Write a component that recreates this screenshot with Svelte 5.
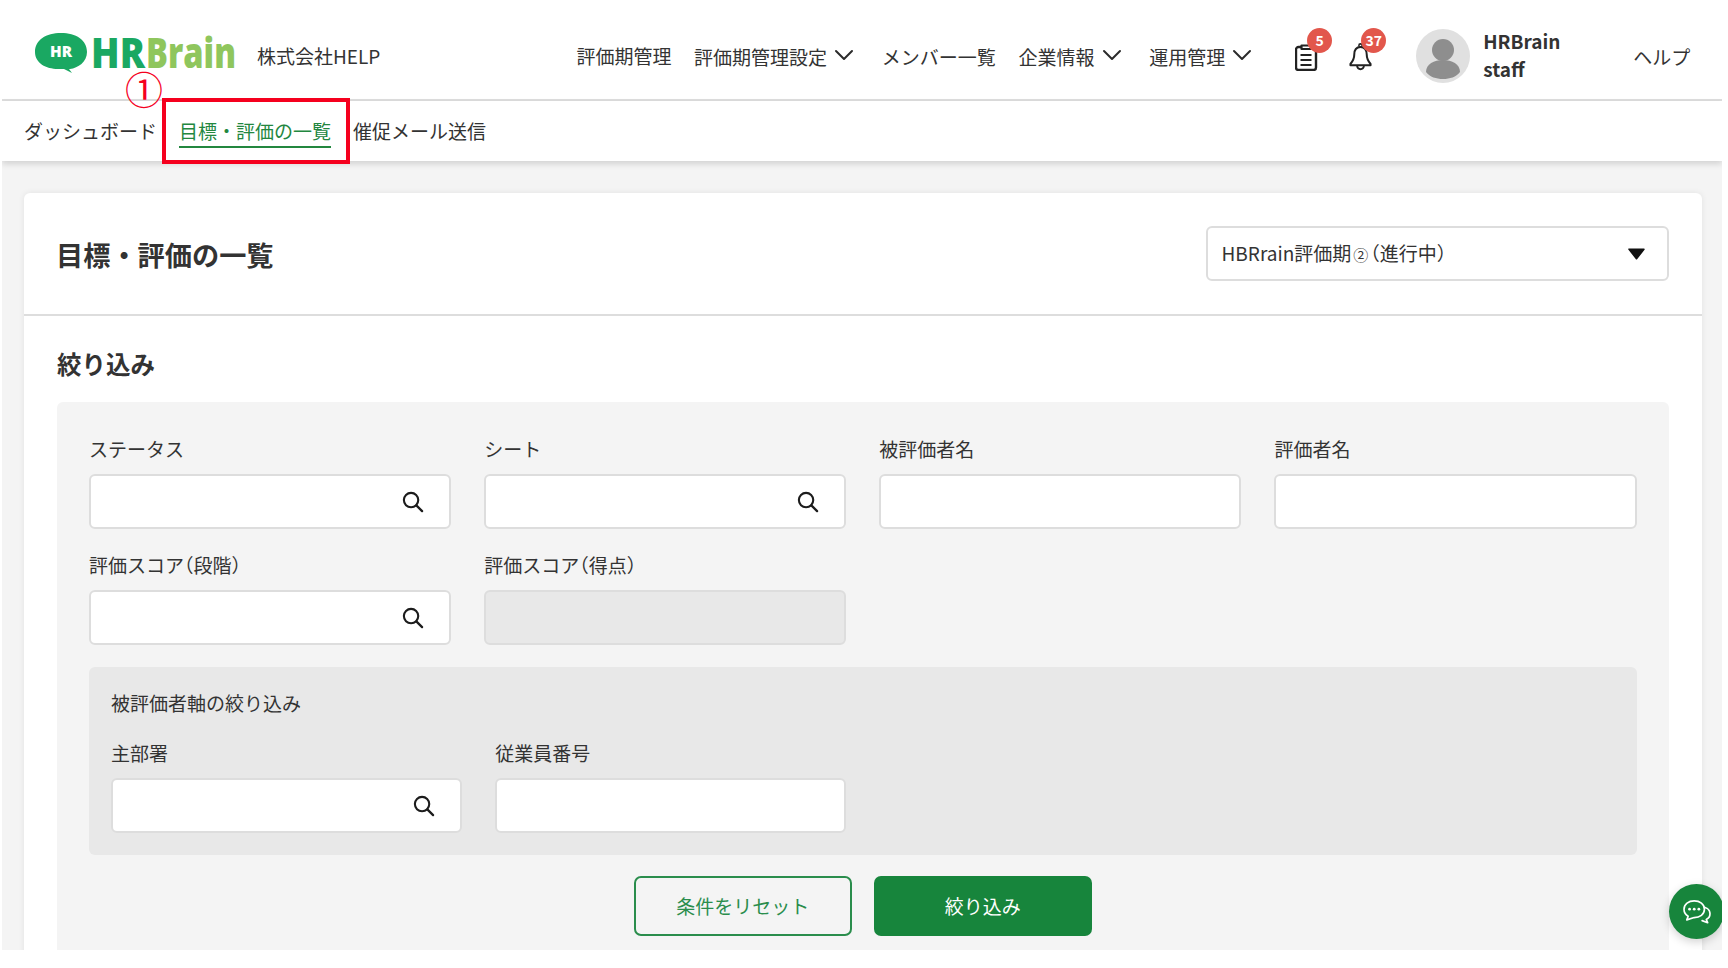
<script>
  const rowA = [
    { label: 'ステータス', search: true },
    { label: 'シート', search: true },
    { label: '被評価者名', search: false },
    { label: '評価者名', search: false }
  ];
</script>

{#snippet searchIcon()}
  <svg class="search" viewBox="0 0 24 24" aria-hidden="true">
    <circle cx="10.5" cy="10.5" r="7.5" fill="none" stroke="#1c1c1c" stroke-width="2.2" />
    <path d="M16 16l6 6" fill="none" stroke="#1c1c1c" stroke-width="2.4" stroke-linecap="round" />
  </svg>
{/snippet}

{#snippet chevron()}
  <svg class="chev" viewBox="0 0 20 12" aria-hidden="true">
    <path d="M2 2l8 8 8-8" fill="none" stroke="#2b2b2b" stroke-width="2" stroke-linecap="round" stroke-linejoin="round" />
  </svg>
{/snippet}

<div class="page">
  <header class="top">
    <div class="logo">
      <svg viewBox="0 0 202 44" class="logo-svg" role="img" aria-label="HRBrain">
        <path d="M1 21C1 9 12 2 27 2s26 7 26 19c0 10-9 16-17 17l-1 0 3 4-8-4H24C12 38 1 32 1 21z" fill="#1aa862" />
        <text x="27" y="26" text-anchor="middle" class="lg-hr" textLength="22" lengthAdjust="spacingAndGlyphs">HR</text>
        <text x="57" y="37" class="lg-a" textLength="54" lengthAdjust="spacingAndGlyphs">HR</text>
        <text x="112" y="37" class="lg-b" textLength="90" lengthAdjust="spacingAndGlyphs">Brain</text>
      </svg>
    </div>
    <div class="company">株式会社HELP</div>
    <nav class="main-nav">
      <span class="item plain">評価期管理</span>
      <span class="item">評価期管理設定{@render chevron()}</span>
      <span class="item plain">メンバー一覧</span>
      <span class="item">企業情報{@render chevron()}</span>
      <span class="item">運用管理{@render chevron()}</span>
    </nav>
    <div class="alerts">
      <div class="alert">
        <svg viewBox="1 1 22 28" class="a-icon" aria-hidden="true">
          <path d="M7 5H4a2.500 2.500 0 0 0-2.500 2.500v18A2.500 2.500 0 0 0 4 28h15a2.500 2.500 0 0 0 2.500-2.500v-18A2.500 2.500 0 0 0 19 5h-2" fill="none" stroke="#222" stroke-width="2.400" />
          <path d="M7 7V3.500h10V7z" fill="none" stroke="#222" stroke-width="2.200" stroke-linejoin="round" />
          <path d="M6 13h11M6 18h11M6 23h11" stroke="#222" stroke-width="2.200" fill="none" />
        </svg>
        <span class="badge">5</span>
      </div>
      <div class="alert">
        <svg viewBox="0 1 24 28" class="a-icon" aria-hidden="true">
          <path d="M12 4.500c-4.500 0-6.500 3.500-6.500 8 0 5-1.500 7-4 9.800V23.500h21V22.300c-2.500-2.800-4-4.800-4-9.800 0-4.500-2-8-6.500-8z" fill="none" stroke="#222" stroke-width="2.100" stroke-linejoin="round" />
          <path d="M8.500 24.500a3.500 3.200 0 0 0 7 0" fill="none" stroke="#222" stroke-width="2" />
          <circle cx="12" cy="3" r="1.700" fill="none" stroke="#222" stroke-width="1.600" />
        </svg>
        <span class="badge">37</span>
      </div>
    </div>
    <div class="avatar">
      <svg viewBox="0 0 54 54" aria-hidden="true">
        <circle cx="27" cy="27" r="27" fill="#e0e0e0" />
        <circle cx="27" cy="21" r="11" fill="#8e8e8e" />
        <path d="M10 43c0-8 8-12 17-12s17 4 17 12c-4 5-10 7-17 7s-13-2-17-7z" fill="#8e8e8e" />
      </svg>
    </div>
    <div class="user">HRBrain<br />staff</div>
    <div class="help">ヘルプ</div>
  </header>

  <nav class="sub-nav">
    <span>ダッシュボード</span>
    <span class="active">目標・評価の一覧</span>
    <span>催促メール送信</span>
  </nav>

  <main class="card">
    <div class="card-head">
      <h1>目標・評価の一覧</h1>
      <div class="select">
        <span>HBRrain評価期<span class="small">②</span><span class="halt">（</span>進行中<span class="halt">）</span></span>
        <svg class="caret" viewBox="0 0 16 11" aria-hidden="true"><path d="M1 1h14L8 10z" fill="#111" stroke="#111" stroke-width="1.500" stroke-linejoin="round" /></svg>
      </div>
    </div>
    <div class="card-body">
      <h2>絞り込み</h2>
      <div class="filter">
        <div class="grid">
          {#each rowA as f}
            <div class="field">
              <label for="">{f.label}</label>
              <div class="input">{#if f.search}{@render searchIcon()}{/if}</div>
            </div>
          {/each}
          <div class="field">
            <label for="">評価スコア<span class="halt">（</span>段階<span class="halt">）</span></label>
            <div class="input">{@render searchIcon()}</div>
          </div>
          <div class="field">
            <label for="">評価スコア<span class="halt">（</span>得点<span class="halt">）</span></label>
            <div class="input disabled"></div>
          </div>
        </div>
        <section class="panel">
          <div class="panel-title">被評価者軸の絞り込み</div>
          <div class="grid">
            <div class="field">
              <label for="">主部署</label>
              <div class="input">{@render searchIcon()}</div>
            </div>
            <div class="field">
              <label for="">従業員番号</label>
              <div class="input"></div>
            </div>
          </div>
        </section>
        <div class="actions">
          <button class="btn ghost">条件をリセット</button>
          <button class="btn solid">絞り込み</button>
        </div>
      </div>
    </div>
  </main>

  <div class="chat">
    <svg viewBox="0 0 32 28" aria-hidden="true">
      <path d="M20.500 8.500c5 0 9.500 2.500 9.500 7.500 0 3-1.500 5-4 6.200l1.500 3.300-6-2.200" fill="none" stroke="#fff" stroke-width="1.800" stroke-linejoin="round" stroke-linecap="round" />
      <path d="M13 2C7 2 2 5.500 2 11c0 3.500 2 6 4.500 7.500L5 22.500l8-2.500c6 0 11-3.500 11-9S19 2 13 2z" fill="#17853c" stroke="#fff" stroke-width="1.800" stroke-linejoin="round" />
      <circle cx="8" cy="11" r="1.500" fill="#fff" /><circle cx="13" cy="11" r="1.500" fill="#fff" /><circle cx="18" cy="11" r="1.500" fill="#fff" />
    </svg>
  </div>

  <div class="mark-box"></div>
  <div class="mark-num">①</div>
</div>

<style>
  :global(body) {
    margin: 0;
    background: #fff;
    font-family: "Noto Sans CJK JP", "Noto Sans", sans-serif;
    color: #333;
  }
  .page {
    position: relative;
    width: 1720px;
    height: 950px;
    margin-left: 2px;
    background: #f4f4f4;
    overflow: hidden;
    font-size: 19px;
    line-height: 28px;
  }
  .top {
    display: flex;
    align-items: center;
    height: 101px;
    box-sizing: border-box;
    border-bottom: 2px solid #ddd;
    background: #fff;
    padding-left: 32px;
  }
  .logo-svg { display: block; width: 202px; height: 44px; overflow: visible; }
  .logo { margin-top: 6px; }
  .lg-hr { font: 800 16px "Open Sans", sans-serif; fill: #fff; }
  .lg-a { font: 800 42px "Open Sans", sans-serif; fill: #1aa862; }
  .lg-b { font: 800 42px "Open Sans", sans-serif; fill: #8fc65d; }
  .company { margin-left: 21px; margin-top: 12px; }
  .main-nav {
    display: flex;
    align-items: center;
    gap: 22.7px;
    margin-left: 196px;
    margin-top: 15px;
  }
  .item { display: flex; align-items: center; white-space: nowrap; }
  .item.plain:first-child { margin-top: -2px; }
  .chev { width: 20px; height: 12px; margin: -4px 5px 0 7px; }
  .alerts { display: flex; gap: 31px; margin-left: 38px; margin-top: 14px; }
  .alert { position: relative; width: 23px; height: 28px; }
  .a-icon { display: block; width: 23px; height: 28px; }
  .badge {
    position: absolute;
    left: 12px;
    top: -15px;
    width: 25px;
    height: 25px;
    border-radius: 50%;
    background: #e2574c;
    color: #fff;
    font-size: 14px;
    font-weight: 700;
    line-height: 25px;
    text-align: center;
  }
  .avatar { width: 54px; height: 54px; margin-left: 44px; margin-top: 12px; }
  .avatar svg { display: block; width: 54px; height: 54px; }
  .user { margin-left: 13px; margin-top: 10px; font-weight: 700; width: 150px; }
  .help { white-space: nowrap; margin-top: 14px; }
  .sub-nav {
    position: relative;
    display: flex;
    align-items: flex-start;
    gap: 22px;
    height: 60px;
    box-sizing: border-box;
    padding: 16px 0 0 22px;
    background: #fff;
    box-shadow: 0 3px 6px rgba(0, 0, 0, 0.14);
  }
  .sub-nav span { display: block; height: 29px; white-space: nowrap; }
  .active { color: #23873f; border-bottom: 2px solid #23873f; }
  .card {
    margin: 32px 20.5px 0 22px;
    background: #fff;
    border-radius: 6px 6px 0 0;
    box-shadow: 0 0 6px rgba(0, 0, 0, 0.08);
  }
  .card-head {
    display: flex;
    align-items: center;
    justify-content: space-between;
    height: 123px;
    box-sizing: border-box;
    padding: 0 33px;
    border-bottom: 2px solid #ddd;
  }
  h1 { margin: 0 0 0 -1px; font-size: 27.2px; line-height: 40px; font-weight: 700; }
  .select {
    display: flex;
    align-items: center;
    justify-content: space-between;
    width: 463px;
    height: 55px;
    box-sizing: border-box;
    padding: 0 22px 0 14px;
    border: 2px solid #ddd;
    border-radius: 6px;
  }
  .small { font-size: 15px; padding: 0 2px; }
  .halt { font-feature-settings: "halt"; }
  .caret { width: 17px; height: 12px; }
  .card-body { padding: 0 33px; height: 640px; }
  h2 { margin: 0; padding: 30px 0 20px; font-size: 24.5px; line-height: 36px; font-weight: 700; }
  .filter { background: #f4f4f4; border-radius: 6px; padding: 33px 32px 0; height: 560px; }
  .grid { display: grid; grid-template-columns: repeat(4, 1fr); gap: 22px 33px; }
  label { display: block; margin-bottom: 11px; }
  .input {
    position: relative;
    display: flex;
    align-items: center;
    justify-content: flex-end;
    height: 55px;
    box-sizing: border-box;
    padding-right: 25px;
    background: #fff;
    border: 2px solid #ddd;
    border-radius: 6px;
  }
  .disabled { background: #e8e8e8; }
  .search { width: 23px; height: 23px; }
  .panel {
    margin-top: 22px;
    padding: 22px 22px 22px;
    background: #e8e8e8;
    border-radius: 6px;
  }
  .panel-title { margin-bottom: 22px; }
  .actions { display: flex; justify-content: center; gap: 22px; margin-top: 21px; }
  .btn {
    width: 218px;
    height: 60px;
    box-sizing: border-box;
    border-radius: 7px;
    font: inherit;
    cursor: pointer;
  }
  .ghost { background: transparent; border: 2px solid #2a8d4c; color: #2a8d4c; }
  .solid { background: #17853c; border: 0; color: #fff; }
  .chat {
    position: absolute;
    left: 1667px;
    top: 884px;
    width: 55px;
    height: 55px;
    border-radius: 50%;
    background: #17853c;
    display: flex;
    align-items: center;
    justify-content: center;
    box-shadow: 0 3px 10px rgba(0, 0, 0, 0.18);
  }
  .chat svg { width: 30px; height: 26px; }
  .mark-box {
    position: absolute;
    left: 160px;
    top: 98px;
    width: 188px;
    height: 66px;
    box-sizing: border-box;
    border: 4px solid #f5001e;
  }
  .mark-num {
    position: absolute;
    left: 123px;
    top: 69px;
    width: 38px;
    font-size: 38px;
    line-height: 38px;
    color: #f5001e;
    text-align: center;
  }
</style>
